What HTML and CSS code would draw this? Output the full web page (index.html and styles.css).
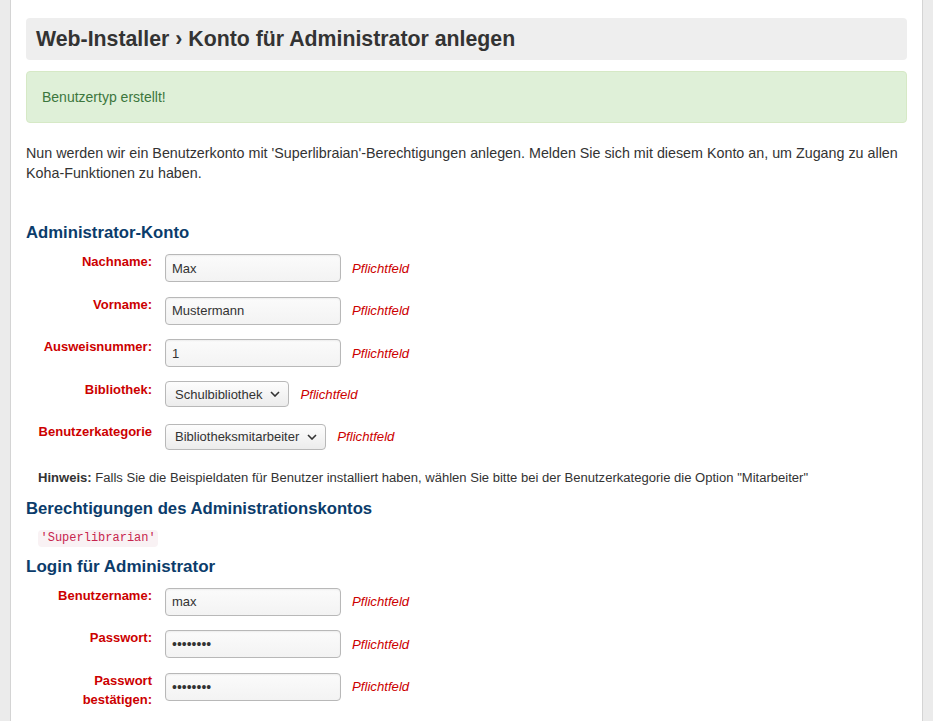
FILE: index.html
```html
<!DOCTYPE html>
<html lang="de">
<head>
<meta charset="utf-8">
<title>Web-Installer › Konto für Administrator anlegen</title>
<link rel="stylesheet" href="styles.css">
</head>
<body>
<div class="panel">
  <h1 class="title">Web-Installer › Konto für Administrator anlegen</h1>
  <div class="alert">Benutzertyp erstellt!</div>
  <p class="intro">Nun werden wir ein Benutzerkonto mit 'Superlibraian'-Berechtigungen anlegen. Melden Sie sich mit diesem Konto an, um Zugang zu allen Koha-Funktionen zu haben.</p>

  <form class="form">
    <h3 class="section first">Administrator-Konto</h3>
    <ol class="rows">
      <li class="row"><label class="lbl">Nachname:</label><div class="ctl"><input class="txt" type="text" value="Max"><span class="req">Pflichtfeld</span></div></li>
      <li class="row"><label class="lbl">Vorname:</label><div class="ctl"><input class="txt" type="text" value="Mustermann"><span class="req">Pflichtfeld</span></div></li>
      <li class="row"><label class="lbl">Ausweisnummer:</label><div class="ctl"><input class="txt" type="text" value="1"><span class="req">Pflichtfeld</span></div></li>
      <li class="row sel-row"><label class="lbl">Bibliothek:</label><div class="ctl"><span class="sel">Schulbibliothek<svg class="chev" viewBox="0 0 10 6" width="10" height="6"><path d="M1 1l4 4 4-4" fill="none" stroke="#333" stroke-width="1.6"/></svg></span><span class="req">Pflichtfeld</span></div></li>
      <li class="row sel-row"><label class="lbl">Benutzerkategorie</label><div class="ctl"><span class="sel">Bibliotheksmitarbeiter<svg class="chev" viewBox="0 0 10 6" width="10" height="6"><path d="M1 1l4 4 4-4" fill="none" stroke="#333" stroke-width="1.6"/></svg></span><span class="req">Pflichtfeld</span></div></li>
    </ol>
    <p class="hint"><strong>Hinweis:</strong> Falls Sie die Beispieldaten für Benutzer installiert haben, wählen Sie bitte bei der Benutzerkategorie die Option "Mitarbeiter"</p>

    <h3 class="section">Berechtigungen des Administrationskontos</h3>
    <div class="perm"><code class="code">'Superlibrarian'</code></div>

    <h3 class="section login">Login für Administrator</h3>
    <ol class="rows">
      <li class="row"><label class="lbl">Benutzername:</label><div class="ctl"><input class="txt" type="text" value="max"><span class="req">Pflichtfeld</span></div></li>
      <li class="row"><label class="lbl">Passwort:</label><div class="ctl"><input class="txt pw" type="password" value="koha1234"><span class="req">Pflichtfeld</span></div></li>
      <li class="row"><label class="lbl">Passwort bestätigen:</label><div class="ctl"><input class="txt pw" type="password" value="koha1234"><span class="req">Pflichtfeld</span></div></li>
    </ol>
  </form>
</div>
</body>
</html>
```

FILE: styles.css
```css
html, body {
  margin: 0;
  padding: 0;
}
body {
  background: #ebebeb;
  font-family: "Liberation Sans", Arial, sans-serif;
  color: #333;
  font-size: 14px;
}
.panel {
  margin: 0 10px;
  background: #fff;
  border-left: 1px solid #d4d4d4;
  border-right: 1px solid #d4d4d4;
  padding: 18px 15px 40px;
  min-height: 721px;
  box-sizing: border-box;
}
.title {
  margin: 0 0 11px;
  background: #eee;
  border-radius: 4px;
  padding: 10px 10px;
  font-size: 21.3px;
  line-height: 22px;
  font-weight: bold;
  color: #333;
}
.alert {
  background: #dff0d8;
  border: 1px solid #d6e9c6;
  border-radius: 4px;
  color: #3c763d;
  padding: 15px 15px;
  line-height: 20px;
  font-size: 14px;
  margin-bottom: 20px;
}
.intro {
  margin: 0;
  line-height: 20px;
  font-size: 14.3px;
}
.form {
  margin: 0;
}
.section {
  margin: 12px 0 9px;
  font-size: 16.7px;
  line-height: 20px;
  font-weight: bold;
  color: #0b3c6b;
}
.section.first {
  margin-top: 40px;
}
.section.login {
  margin-top: 10px;
  margin-bottom: 9px;
  font-size: 17px;
}
.rows {
  list-style: none;
  margin: 0;
  padding: 0;
}
.row {
  display: flex;
  align-items: flex-start;
  height: 42.5px;
}
.lbl {
  width: 126px;
  margin-right: 13px;
  text-align: right;
  font-size: 13px;
  font-weight: bold;
  line-height: 19px;
  color: #cc0000;
  padding-top: 0;
}
.ctl {
  display: flex;
  align-items: center;
  gap: 11px;
  margin-top: 2px;
}
.sel-row .ctl {
  margin-top: 1.5px;
}
.txt {
  box-sizing: border-box;
  width: 176px;
  height: 28px;
  border: 1px solid #b8b8b8;
  border-radius: 4px;
  background: linear-gradient(#fbfbfb, #f3f3f3);
  box-shadow: inset 0 1px 2px rgba(0,0,0,0.06);
  padding: 0 6px;
  font-family: "Liberation Sans", Arial, sans-serif;
  font-size: 13px;
  color: #333;
  margin: 0;
}
.pw {
  font-size: 14px;
  letter-spacing: 0;
}
.sel {
  box-sizing: border-box;
  height: 26px;
  display: inline-flex;
  align-items: center;
  gap: 8px;
  padding: 0 8px 0 9px;
  border: 1px solid #b8b8b8;
  border-radius: 4px;
  background: linear-gradient(#fdfdfd, #ececec);
  font-size: 13px;
  color: #333;
  white-space: nowrap;
}
.chev {
  display: block;
}
.req {
  font-size: 13.2px;
  font-style: italic;
  color: #cc0000;
}
.hint {
  margin: 0 0 0 12px;
  font-size: 13.05px;
  line-height: 18px;
  color: #333;
  padding-top: 4px;
}
.perm {
  padding-left: 12px;
}
.code {
  display: inline-block;
  background: #f9f2f4;
  color: #c7254e;
  border-radius: 4px;
  font-family: "Liberation Mono", "Courier New", monospace;
  font-size: 12px;
  line-height: 17px;
  padding: 0 2.5px;
}
```
